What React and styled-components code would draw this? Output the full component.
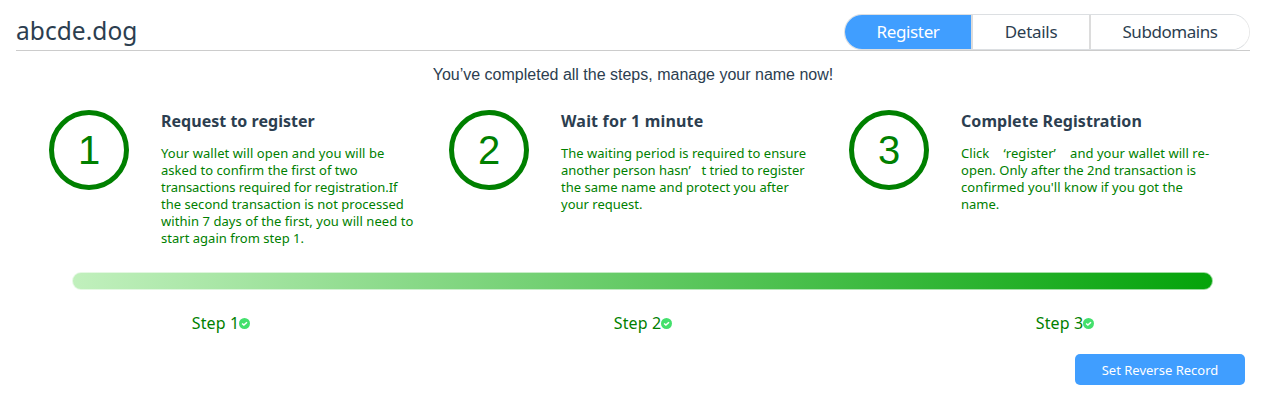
import React from "react";
import styled, { createGlobalStyle } from "styled-components";

const GlobalStyle = createGlobalStyle`
  * { box-sizing: border-box; }
  body {
    margin: 0;
    background: #fff;
    color: #2c3e50;
    font-family: "Noto Sans", "Open Sans", "Noto Sans CJK SC", sans-serif;
  }
`;

const Page = styled.main`
  width: 1266px;
  height: 406px;
  padding: 14px 16px 0;
  overflow: hidden;
`;

const Header = styled.header`
  display: flex;
  justify-content: space-between;
  height: 37px;
  border-bottom: 1px solid #ccc;
`;

const Name = styled.h1`
  margin: 0;
  font-size: 24.5px;
  font-weight: 400;
  line-height: 34px;
  letter-spacing: 0.05px;
`;

const Tabs = styled.nav`
  display: flex;
  width: 406px;
  height: 36px;
  border: 1px solid #dcdfe2;
  border-right-color: #e8e8e8;
  border-radius: 18px;
  overflow: hidden;
`;

const Tab = styled.button`
  width: ${(p) => p.$width}px;
  padding: 0;
  border: 0;
  border-right: ${(p) => (p.$last ? 0 : "2px solid #dcdcdc")};
  background: ${(p) => (p.$active ? "#409eff" : "#fff")};
  color: ${(p) => (p.$active ? "#fff" : "#2c3e50")};
  font: 400 17px/34px "Noto Sans", "Open Sans", sans-serif;
  letter-spacing: ${(p) => p.$spacing}px;
`;

const Message = styled.p`
  margin: 14px 0 0;
  font: 16px/20px "Liberation Sans", Arial, sans-serif;
  text-align: center;
  white-space: nowrap;
`;

const Steps = styled.section`
  display: grid;
  grid-template-columns: repeat(3, 400px);
  height: 136px;
  margin: 25px 0 0 33px;
`;

const Step = styled.article`
  display: flex;
  gap: 32px;
`;

const Circle = styled.div`
  flex: none;
  width: 80px;
  height: 80px;
  border: 5px solid #008000;
  border-radius: 50%;
  color: #008000;
  font: 40px/70px "Liberation Sans", Arial, sans-serif;
  text-align: center;
`;

const StepTitle = styled.h2`
  margin: 0 0 13px;
  font-size: 16px;
  font-weight: 700;
  line-height: 22px;
  white-space: nowrap;
  letter-spacing: ${(p) => p.$spacing}px;
`;

const Line = styled.div`
  color: #008000;
  font-size: 13px;
  line-height: 17px;
  white-space: nowrap;
  letter-spacing: ${(p) => p.$spacing}px;
`;

const Quote = styled.span`
  display: inline-block;
  width: 13px;
  text-align: ${(p) => (p.$open ? "right" : "left")};
`;

const Bar = styled.div`
  width: 1141px;
  height: 18px;
  margin: 26px 0 0 56px;
  border: 1px solid rgba(255, 255, 255, 0.6);
  border-radius: 9px;
  background: linear-gradient(to right, #c1f0bd, #04a30a) border-box;
`;

const Labels = styled.div`
  display: grid;
  grid-template-columns: repeat(3, 422px);
  width: 1266px;
  margin: 22px 0 0 -6px;
`;

const Label = styled.div`
  display: flex;
  align-items: center;
  justify-content: center;
  height: 22px;
  color: #008000;
  font-size: 16px;
  letter-spacing: 0.1px;
`;

const Footer = styled.footer`
  display: flex;
  justify-content: flex-end;
  padding: 20px 5px 0 0;
`;

const Action = styled.button`
  width: 170px;
  height: 31px;
  padding: 2px 0 0;
  border: 0;
  border-radius: 5px;
  background: #409eff;
  color: #fff;
  font: 13px/29px "Noto Sans", "Open Sans", sans-serif;
`;

const Check = () => (
  <svg width="11" height="11" viewBox="0 0 11 11">
    <circle cx="5.5" cy="5.5" r="5.5" fill="#43e06c" />
    <path d="M3.1 5.5 4.9 7.1 8 4.2" fill="none" stroke="#fff" strokeWidth="1.5" />
  </svg>
);

const tabs = [
  { text: "Register", width: 128, spacing: -0.35 },
  { text: "Details", width: 118, spacing: -0.3 },
  { text: "Subdomains", width: 158, spacing: -0.45 },
];

const steps = [
  {
    title: "Request to register",
    spacing: 0.02,
    lines: [
      ["Your wallet will open and you will be", 0.07],
      ["asked to confirm the first of two", 0.04],
      ["transactions required for registration.If", -0.05],
      ["the second transaction is not processed", 0.02],
      ["within 7 days of the first, you will need to", 0.06],
      ["start again from step 1.", 0.02],
    ],
  },
  {
    title: "Wait for 1 minute",
    spacing: 0.2,
    lines: [
      ["The waiting period is required to ensure", 0.02],
      [<>another person hasn<Quote>’</Quote>t tried to register</>, -0.02],
      ["the same name and protect you after", 0.02],
      ["your request.", 0],
    ],
  },
  {
    title: "Complete Registration",
    spacing: 0.07,
    lines: [
      [<>Click <Quote $open>‘</Quote>register<Quote>’</Quote> and your wallet will re-</>, 0.05],
      ["open. Only after the 2nd transaction is", 0.02],
      ["confirmed you'll know if you got the", 0.08],
      ["name.", 0],
    ],
  },
];

export default function App() {
  return (
    <Page>
      <GlobalStyle />
      <Header>
        <Name>abcde.dog</Name>
        <Tabs>
          {tabs.map((t, i) => (
            <Tab key={t.text} $width={t.width} $spacing={t.spacing} $active={i === 0} $last={i === 2}>
              {t.text}
            </Tab>
          ))}
        </Tabs>
      </Header>
      <Message>You’ve completed all the steps, manage your name now!</Message>
      <Steps>
        {steps.map((s, i) => (
          <Step key={s.title}>
            <Circle>{i + 1}</Circle>
            <div>
              <StepTitle $spacing={s.spacing}>{s.title}</StepTitle>
              {s.lines.map(([text, spacing], n) => (
                <Line key={n} $spacing={spacing}>{text}</Line>
              ))}
            </div>
          </Step>
        ))}
      </Steps>
      <Bar />
      <Labels>
        {[1, 2, 3].map((n) => (
          <Label key={n}>Step {n}<Check /></Label>
        ))}
      </Labels>
      <Footer>
        <Action>Set Reverse Record</Action>
      </Footer>
    </Page>
  );
}
